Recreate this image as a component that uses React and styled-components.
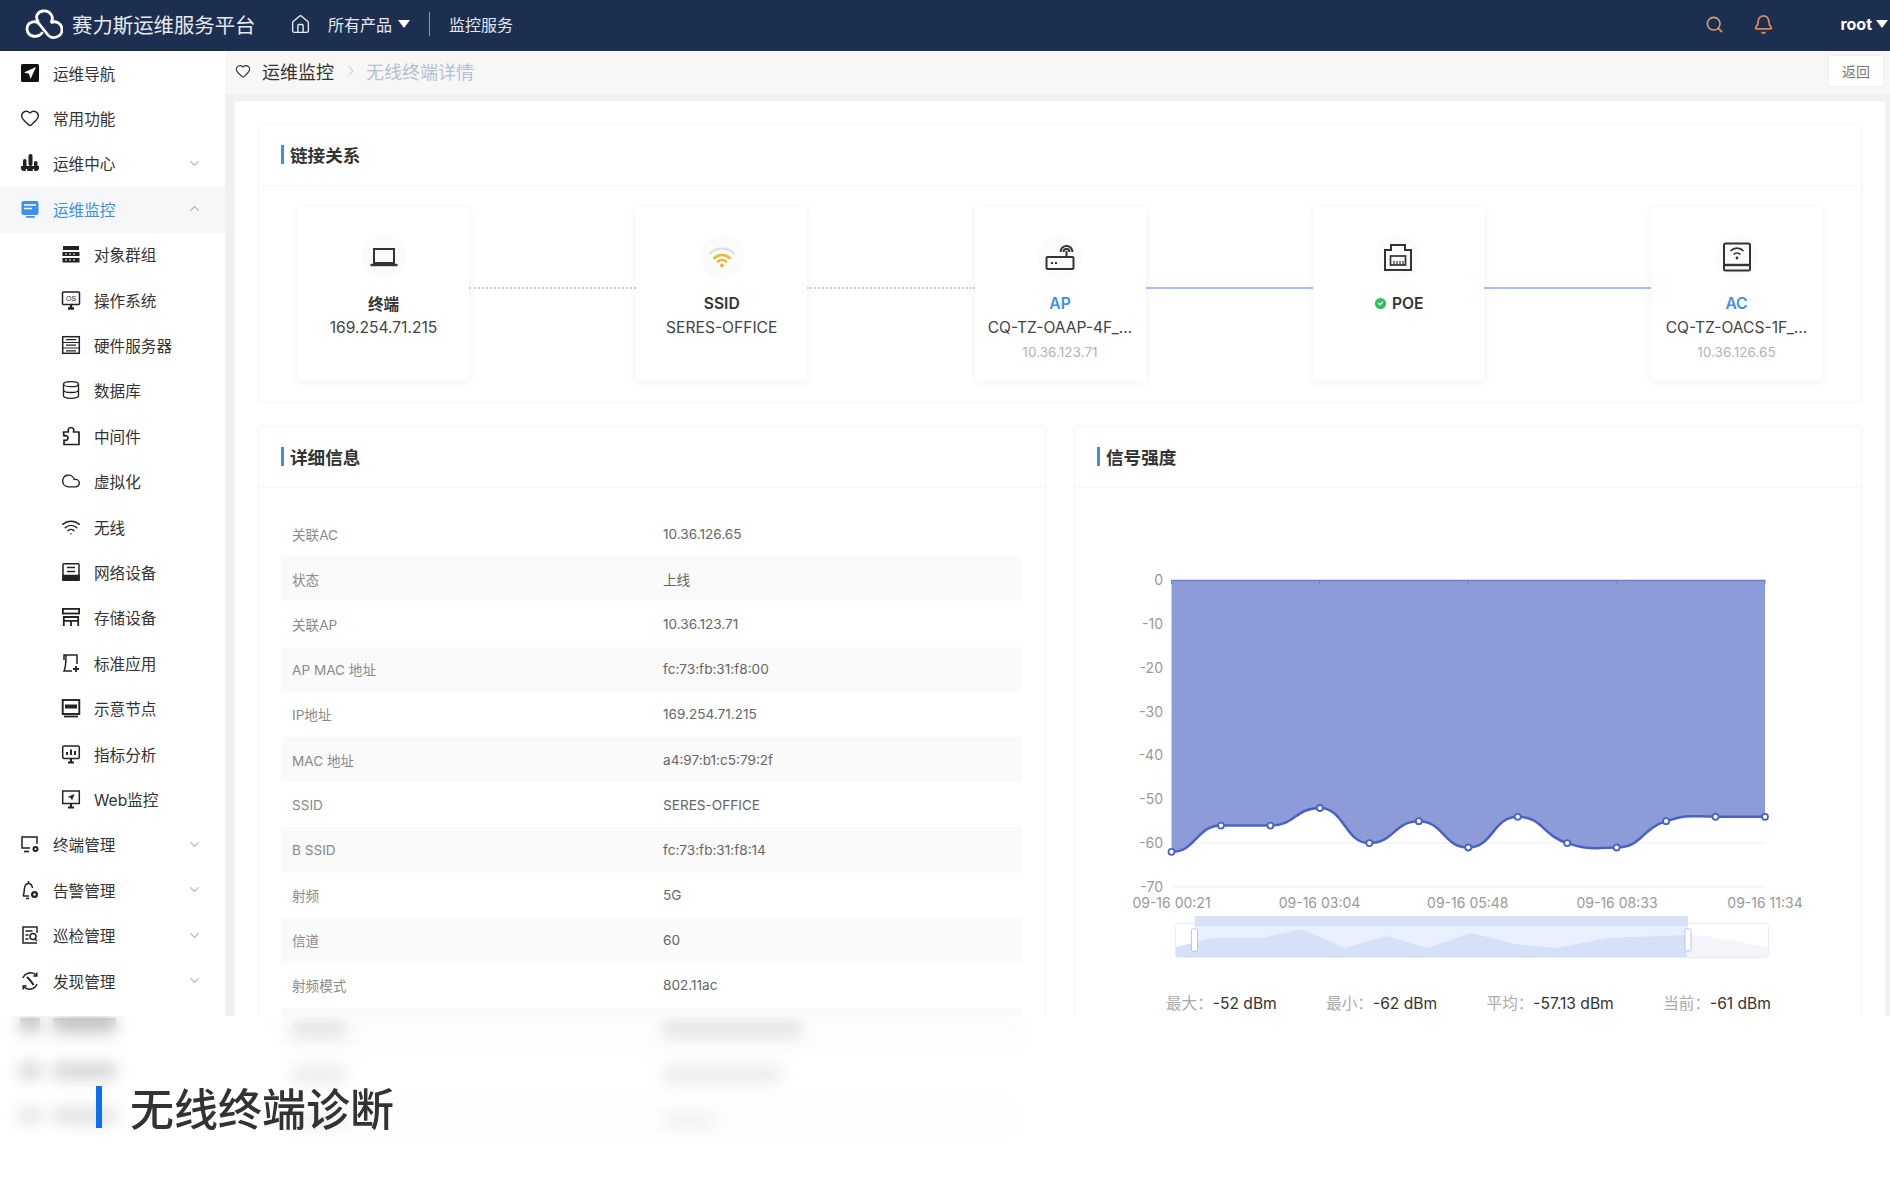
import React from "react";
import styled, { createGlobalStyle } from "styled-components";
import {
  House, Search, Bell, Heart, ChevronDown, ChevronUp, ChevronRight,
  Database, Cloud, Wifi, CircleCheck,
} from "lucide-react";

const GlobalStyle = createGlobalStyle`
  html, body {
    margin: 0;
    padding: 0;
    background: #fff;
    font-family: "Inter", "Noto Sans CJK SC", sans-serif;
    color: #333;
  }
`;

const Page = styled.div`
  position: relative;
  width: 1890px;
  height: 1197px;
  overflow: hidden;
  background: #fff;
`;

const TopBar = styled.header`
  height: 51px;
  box-sizing: border-box;
  background: #1d2f50;
  display: flex;
  align-items: center;
  padding: 0 0 3px 25px;
  color: #e6e9ef;
  font-size: 16px;
`;

const Brand = styled.div`
  display: flex;
  align-items: center;
  gap: 9px;
  font-size: 20.4px;
  width: 265px;
`;

const TopMenu = styled.div`
  display: flex;
  align-items: center;
`;

const ProductMenu = styled.span`
  margin-left: 17px;
`;

const Caret = styled.i`
  display: inline-block;
  width: 0;
  height: 0;
  border-left: 6px solid transparent;
  border-right: 6px solid transparent;
  border-top: 8px solid #fff;
  margin-left: ${(p) => p.$gap || 6}px;
`;

const TopDivider = styled.span`
  width: 1px;
  height: 24px;
  background: #8a96ad;
  margin: 0 19px 0 19px;
`;

const TopRight = styled.div`
  margin-left: auto;
  display: flex;
  align-items: center;
  padding-right: 2px;
`;

const UserName = styled.span`
  font-weight: 700;
  color: #fff;
  margin-left: 66px;
`;

const BellWrap = styled.span`
  display: flex;
  margin-left: 29px;
`;

const Body = styled.div`
  display: flex;
  height: 1146px;
`;

const Sidebar = styled.nav`
  width: 225px;
  flex: none;
  background: #fff;
`;

const NavRow = styled.div`
  height: 45.4px;
  box-sizing: border-box;
  display: flex;
  align-items: center;
  gap: 13px;
  padding: 0 23px 2px ${(p) => (p.$sub ? 61 : 20)}px;
  font-size: 15.6px;
  color: ${(p) => (p.$active ? "#3f8ee9" : "#333")};
  background: ${(p) => (p.$active ? "#f6f7f8" : "transparent")};
  svg {
    flex: none;
  }
`;

const NavArrow = styled.span`
  margin-left: auto;
  display: flex;
  color: #b5b5b5;
`;

const BlurBlock = styled.span`
  display: block;
  width: ${(p) => p.$w}px;
  height: 15px;
  background: ${(p) => (p.$light ? "#c6c6c6" : "#8a8a8a")};
`;

const Main = styled.main`
  flex: 1;
  min-width: 0;
  background: linear-gradient(#f1f1f1 965px, #fff 965px);
  display: flex;
  flex-direction: column;
`;

const Crumbs = styled.div`
  height: 43px;
  box-sizing: border-box;
  flex: none;
  display: flex;
  align-items: center;
  padding: 0 6px 3px 10px;
  background: #f7f7f7;
  font-size: 18px;
  color: #333;
`;

const CrumbHeart = styled.span`
  display: flex;
  margin-right: 11px;
`;

const CrumbSep = styled.span`
  display: flex;
  margin: 0 7px 0 9px;
  color: #d4d8df;
`;

const CrumbCurrent = styled.span`
  color: #b4c0d8;
`;

const BackButton = styled.button`
  margin-left: auto;
  width: 56px;
  height: 32px;
  background: #fff;
  border: 1px solid #eeeeee;
  font: inherit;
  font-size: 14px;
  color: #777;
  padding: 0;
`;

const Content = styled.div`
  flex: 1;
  margin: 7px 5px 0 10px;
  background: #fff;
  padding: 23px;
  display: flex;
  flex-direction: column;
  gap: 23px;
`;

const Section = styled.section`
  border: 1px solid #f7f7f7;
  box-shadow: 0 0 4px rgba(0, 0, 0, 0.015);
  display: flex;
  flex-direction: column;
  min-width: 0;
`;

const SectionHead = styled.h3`
  height: 61px;
  margin: 0;
  flex: none;
  box-sizing: border-box;
  display: flex;
  align-items: center;
  padding: 0 0 2px 22px;
  border-bottom: 1px solid #f5f5f5;
  font-size: 17.6px;
  font-weight: 600;
  color: #333;
  &::before {
    content: "";
    width: 3px;
    height: 19px;
    background: #3f8ee9;
    margin-right: 6px;
  }
`;

const LinkRow = styled.div`
  display: flex;
  align-items: center;
  padding: 21px 39px;
`;

const NodeCard = styled.div`
  width: 171px;
  height: 174px;
  flex: none;
  padding-top: 28px;
  box-sizing: border-box;
  display: flex;
  flex-direction: column;
  align-items: center;
  background: #fff;
  box-shadow: 0 1px 9px rgba(0, 0, 0, 0.06);
`;

const NodeIcon = styled.div`
  width: 44px;
  height: 44px;
  border-radius: 50%;
  background: #fbfbfb;
  display: flex;
  align-items: center;
  justify-content: center;
  margin-bottom: 12px;
`;

const NodeName = styled.div`
  display: flex;
  align-items: center;
  gap: 4px;
  height: 24px;
  font-size: 15.6px;
  font-weight: 600;
  color: ${(p) => (p.$blue ? "#3f8ee9" : "#333")};
`;

const NodeText = styled.div`
  height: 24px;
  line-height: 26px;
  font-size: 15.6px;
  color: #444;
  white-space: nowrap;
`;

const NodeIp = styled.div`
  height: 26px;
  line-height: 26px;
  font-size: 13.6px;
  color: #b3b3b3;
`;

const Connector = styled.div`
  flex: 1;
  margin-top: -12px;
  border-top: 2px ${(p) => (p.$on ? "solid #a9c1f0" : "dotted #cfcfcf")};
`;

const Lower = styled.div`
  display: grid;
  grid-template-columns: 788px 788px;
  gap: 28px;
  flex: 1;
`;

const InfoTable = styled.div`
  padding: 23px 23px 0 22px;
`;

const InfoRow = styled.div`
  height: 45.2px;
  display: flex;
  align-items: center;
  padding-left: 11px;
  font-size: 13.6px;
  color: #666;
  background: ${(p) => (p.$even ? "#fafafa" : "#fff")};
`;

const InfoLabel = styled.span`
  width: 371px;
  flex: none;
  color: #8a8a8a;
`;

const ChartSvg = styled.svg`
  display: block;
  width: 786px;
  height: 500px;
  flex: none;
`;

const Stats = styled.div`
  display: flex;
  justify-content: space-between;
  margin: 3px 90px 0 91px;
  font-size: 15.6px;
  color: #333;
  white-space: nowrap;
`;

const StatLabel = styled.span`
  color: #ababab;
`;

const Overlay = styled.div`
  position: absolute;
  left: 0;
  right: 0;
  top: 1016px;
  bottom: 0;
  backdrop-filter: blur(8px);
  background: linear-gradient(rgba(255, 255, 255, 0.45), rgba(255, 255, 255, 0.8) 130px);
  display: flex;
  align-items: flex-start;
  padding: 70px 0 0 96px;
`;

const Heading = styled.h1`
  margin: 0;
  display: flex;
  align-items: center;
  gap: 28px;
  height: 42px;
  font-size: 44px;
  font-weight: 500;
  color: #333;
  &::before {
    content: "";
    width: 6px;
    height: 42px;
    background: #0b6ff0;
  }
`;

const ic = { width: 20, height: 20, viewBox: "0 0 20 20", fill: "none", stroke: "#222", strokeWidth: 1.5 };

const Logo = () => (
  <svg width="38" height="32" viewBox="0 0 38 32" fill="none" stroke="#fff" strokeWidth="2.8" strokeLinecap="round">
    <path d="M17 25C13 30 3 30 2 21C2 14 11 11 15 17L23 27C27 32 37 29 37 22C37 15 30 12 26 15C30 8 24 2 18 3C12 4 10 9 13 13" />
  </svg>
);

const navIcons = {
  guide: (
    <svg {...ic} stroke="none" fill="#111">
      <rect x="1" y="1" width="18" height="18" rx="1.5" />
      <path d="M16 4L10.5 16L9 10.8L4 9.4Z" fill="#fff" />
    </svg>
  ),
  fav: <Heart size={20} strokeWidth={1.7} color="#222" />,
  center: (
    <svg {...ic} stroke="none" fill="#222">
      <rect x="8.5" y="1" width="4" height="12" rx="2" />
      <rect x="3" y="6" width="3.5" height="8" rx="1.7" />
      <rect x="14" y="8" width="3.5" height="6" rx="1.7" />
      <path d="M1 13h18v2a3 3 0 0 1-3 3H4a3 3 0 0 1-3-3z" />
      <path d="M6.5 16v3M13.5 16v3" stroke="#fff" strokeWidth="1.4" />
    </svg>
  ),
  monitor: (
    <svg {...ic} stroke="none" fill="#3f8ee9">
      <rect x="1.5" y="2" width="17" height="14" rx="2" />
      <path d="M4 6h12M4 9.5h8" stroke="#fff" strokeWidth="1.5" />
      <rect x="6" y="17" width="9" height="1.8" rx=".9" />
    </svg>
  ),
  group: (
    <svg {...ic}>
      <path d="M2 3h16M2 5h16" strokeWidth="2" />
      <rect x="1.5" y="8" width="17" height="4" fill="#222" stroke="none" />
      <rect x="1.5" y="14" width="17" height="4.5" fill="#222" stroke="none" />
      <path d="M4 10h2M8 10h2M12 10h2M4 16h2M8 16h2M12 16h2" stroke="#fff" strokeWidth="1" />
    </svg>
  ),
  os: (
    <svg {...ic}>
      <rect x="1.5" y="2" width="17" height="12.5" rx="1" />
      <path d="M7 18.5h6M10 15v3" strokeWidth="2.4" />
      <text x="10" y="11" fontSize="7" fill="#222" stroke="none" textAnchor="middle" fontFamily="Liberation Sans, sans-serif">OS</text>
    </svg>
  ),
  server: (
    <svg {...ic}>
      <rect x="1.7" y="1.7" width="16.6" height="16.6" />
      <path d="M1.7 7.5h16.6M1.7 13h16.6M5 4.6h10M5 10.2h10M5 15.8h10" strokeWidth="1.2" />
    </svg>
  ),
  db: <Database size={20} strokeWidth={1.6} color="#222" />,
  mid: (
    <svg {...ic} strokeWidth="1.7" strokeLinejoin="round">
      <path d="M2.500 6H7.500C6.500 3 8 1.500 10 1.500S13.500 3 12.500 6H18V18.500H3V14C5.500 15 7 13.500 7 12S5.500 9 3 10Z" />
    </svg>
  ),
  cloud: <Cloud size={20} strokeWidth={1.7} color="#222" />,
  wifi: <Wifi size={20} strokeWidth={1.7} color="#222" />,
  net: (
    <svg {...ic}>
      <rect x="2" y="1.7" width="16" height="16.600" rx="1" />
      <path d="M6 5.500h8M6 9.500h8" />
      <path d="M2 13.500h16v4.800H2z" fill="#222" />
    </svg>
  ),
  store: (
    <svg {...ic} strokeWidth="1.800">
      <rect x="1.900" y="1.900" width="16.200" height="4.600" />
      <path d="M2 10h16M2.800 10v9M17.200 10v9M10 13.800v5.200M2.800 13.800h14.400" />
    </svg>
  ),
  app: (
    <svg {...ic}>
      <path d="M5 2h11v9M5 2C5 8 5 14 3 18h8" />
      <path d="M5 2L3 2v5" />
      <path d="M15 13v6M12 16h6" strokeWidth="1.8" />
    </svg>
  ),
  node: (
    <svg {...ic}>
      <rect x="1.7" y="2" width="16.6" height="14" fill="none" strokeWidth="1.9" />
      <rect x="4" y="6.5" width="12" height="4" fill="#222" stroke="none" />
      <path d="M3 18.5h14" strokeWidth="1.8" />
    </svg>
  ),
  metric: (
    <svg {...ic}>
      <rect x="1.7" y="2" width="16.6" height="12.5" rx="1.5" />
      <path d="M6 11V8M10 11V5.5M14 11V7" strokeWidth="1.9" />
      <path d="M7 18.5h6M10 15v3" strokeWidth="2.2" />
    </svg>
  ),
  web: (
    <svg {...ic}>
      <rect x="1.7" y="2" width="16.6" height="12.5" />
      <path d="M13.5 5L11 11.5L9.6 8.8L6.5 8z" fill="#222" stroke="none" />
      <path d="M7 18.5h6M10 15v3" strokeWidth="2.2" />
    </svg>
  ),
  terminal: (
    <svg {...ic}>
      <path d="M10 14H2V3h15v7" />
      <path d="M4 17.5h5" strokeWidth="1.7" />
      <circle cx="15.5" cy="15" r="3" fill="#222" stroke="none" />
      <circle cx="15.5" cy="15" r="1" fill="#fff" stroke="none" />
    </svg>
  ),
  alarm: (
    <svg {...ic}>
      <path d="M3 16c1.500-2 1-5 1.500-8C5 5 7 3.500 8.500 3.500S12 5 12.500 8M3 16h6M8.500 1v2.500" />
      <path d="M6 18.500h3" />
      <circle cx="14.500" cy="14.500" r="3.500" fill="#222" stroke="none" />
      <circle cx="14.500" cy="14.500" r="1.200" fill="#fff" stroke="none" />
    </svg>
  ),
  inspect: (
    <svg {...ic}>
      <path d="M17 8V2H3v16h14" />
      <path d="M5.500 6h7M5.500 10h3M5.500 14h3" />
      <circle cx="13" cy="11.500" r="3" />
      <path d="M15 14l2 2" />
    </svg>
  ),
  found: (
    <svg {...ic}>
      <path d="M3 7A8 8 0 0 1 16.500 4.500M17 13A8 8 0 0 1 3.500 15.500" />
      <path d="M16.800 1.500v3.500h-3.500M3.200 18.500V15h3.500" />
      <path d="M7 6c2 2 5 5 6.500 8" strokeWidth="1.800" />
    </svg>
  ),
};

const navItems = [
  { key: "guide", label: "运维导航" },
  { key: "fav", label: "常用功能" },
  { key: "center", label: "运维中心", arrow: "down" },
  { key: "monitor", label: "运维监控", arrow: "up", active: true },
  { key: "group", label: "对象群组", sub: true },
  { key: "os", label: "操作系统", sub: true },
  { key: "server", label: "硬件服务器", sub: true },
  { key: "db", label: "数据库", sub: true },
  { key: "mid", label: "中间件", sub: true },
  { key: "cloud", label: "虚拟化", sub: true },
  { key: "wifi", label: "无线", sub: true },
  { key: "net", label: "网络设备", sub: true },
  { key: "store", label: "存储设备", sub: true },
  { key: "app", label: "标准应用", sub: true },
  { key: "node", label: "示意节点", sub: true },
  { key: "metric", label: "指标分析", sub: true },
  { key: "web", label: "Web监控", sub: true },
  { key: "terminal", label: "终端管理", arrow: "down" },
  { key: "alarm", label: "告警管理", arrow: "down" },
  { key: "inspect", label: "巡检管理", arrow: "down" },
  { key: "found", label: "发现管理", arrow: "down" },
];

const infoRows = [
  ["关联AC", "10.36.126.65"],
  ["状态", "上线"],
  ["关联AP", "10.36.123.71"],
  ["AP MAC 地址", "fc:73:fb:31:f8:00"],
  ["IP地址", "169.254.71.215"],
  ["MAC 地址", "a4:97:b1:c5:79:2f"],
  ["SSID", "SERES-OFFICE"],
  ["B SSID", "fc:73:fb:31:f8:14"],
  ["射频", "5G"],
  ["信道", "60"],
  ["射频模式", "802.11ac"],
];

const big = { width: 32, height: 32, viewBox: "0 0 32 32", fill: "none", stroke: "#333", strokeWidth: 2 };

const LaptopIcon = () => (
  <svg {...big}>
    <rect x="6" y="8" width="20" height="14" />
    <path d="M2.500 24h27" strokeWidth="2.400" />
  </svg>
);
const SsidIcon = () => (
  <svg {...big} strokeLinecap="round">
    <path d="M4 12.500a17 17 0 0 1 24 0" stroke="#ddd" />
    <path d="M8.500 17a11 11 0 0 1 15 0" stroke="#f0b431" strokeWidth="2.600" />
    <path d="M12 20.500a6 6 0 0 1 8 0" stroke="#f0b431" strokeWidth="2.600" />
    <circle cx="16" cy="24.500" r="2" fill="#f0b431" stroke="none" />
  </svg>
);
const RouterIcon = () => (
  <svg {...big}>
    <rect x="2.500" y="16" width="27" height="12" rx="1" />
    <path d="M7 22h2M11 22h2" strokeWidth="2" />
    <path d="M22.500 16V10" />
    <path d="M16.500 11a6 6 0 0 1 12 0M19.500 11a3 3 0 0 1 6 0" />
  </svg>
);
const PoeIcon = () => (
  <svg {...big}>
    <path d="M9 4h14v5h6v20H3V9h6z" />
    <rect x="8.500" y="15" width="15" height="9" strokeWidth="1.700" />
    <path d="M12 20v4M15 20v4M18 20v4M21 20v4" strokeWidth="1.200" />
  </svg>
);
const AcIcon = () => (
  <svg {...big}>
    <rect x="3" y="2.500" width="26" height="27" rx="1.500" />
    <path d="M3 24h26" strokeWidth="2.400" />
    <path d="M9.500 10a9 9 0 0 1 13 0M12.500 13.500a5 5 0 0 1 7 0" strokeWidth="1.700" />
    <circle cx="16" cy="17" r="1.400" fill="#333" stroke="none" />
  </svg>
);

// chart values, y axis runs 0 at px 580 down to -70 at px 887
const values = [-62, -56, -56, -52, -60, -55, -61, -54, -60, -61, -55, -54, -54];
const X0 = 1171.5;
const STEP = 49.46;
const valueY = (v) => 580 - v * 4.385;
const pts = values.map((v, i) => [X0 + STEP * i, valueY(v)]);

const smoothLine = () => {
  const slope = pts.map(([, y], i) => {
    if (i === 0 || i === pts.length - 1) return 0;
    const a = pts[i - 1][1];
    const b = pts[i + 1][1];
    if ((y - a) * (b - y) <= 0) return 0;
    return (b - a) / 2;
  });
  let d = `M${pts[0][0]} ${pts[0][1]}`;
  for (let i = 1; i < pts.length; i++) {
    const [x0, y0] = pts[i - 1];
    const [x1, y1] = pts[i];
    const dx = (x1 - x0) * 0.5;
    d += `C${x0 + dx} ${y0 + slope[i - 1] * 0.5} ${x1 - dx} ${y1 - slope[i] * 0.5} ${x1} ${y1}`;
  }
  return d;
};

const line = smoothLine();
const ticks = [0, -10, -20, -30, -40, -50, -60, -70];
const timeLabels = [
  [1171.5, "09-16 00:21"],
  [1319.5, "09-16 03:04"],
  [1467.8, "09-16 05:48"],
  [1617, "09-16 08:33"],
  [1765, "09-16 11:34"],
];

const SignalChart = () => (
  <ChartSvg viewBox="1075 488 786 500">
    {ticks.map((t) => (
      <g key={t}>
        <line x1="1171.5" x2="1765" y1={valueY(t)} y2={valueY(t)} stroke="#eeeeee" />
        <text x="1163" y={valueY(t) + 5} textAnchor="end" fontSize="14" fill="#999" fontFamily="Inter, sans-serif">{t}</text>
      </g>
    ))}
    <path d={`M${X0} 580L${line.slice(1)}L1765 580Z`} fill="#8d9cd8" />
    <path d={line} fill="none" stroke="#4a63c2" strokeWidth="2.5" />
    <line x1="1171.5" x2="1765" y1="580.5" y2="580.5" stroke="#6f82cc" strokeWidth="1.500" />
    {pts.map(([x, y]) => (
      <circle key={x} cx={x} cy={y} r="3" fill="#fff" stroke="#4a63c2" strokeWidth="1.800" />
    ))}
    {timeLabels.map(([x, label]) => (
      <g key={label}>
        <line x1={x} x2={x} y1="580" y2="584" stroke="#6f82cc" />
        <text x={x} y="908" textAnchor="middle" fontSize="14" fill="#999" fontFamily="Inter, sans-serif">{label}</text>
      </g>
    ))}
    <rect x="1175.500" y="923.500" width="593" height="34" rx="3" fill="#fff" stroke="#e8ecf4" />
    <rect x="1194.700" y="926" width="493.300" height="31" fill="#e8f0fe" />
    <rect x="1194.700" y="916" width="493.300" height="10" fill="#d9e1f5" />
    <path d="M1176 957V947L1213 938H1263L1301 929L1345 948L1387 936L1427 948L1471 933L1515 944L1556 948L1609 938L1687 935V957Z" fill="#d6e0f9" />
    <path d="M1687 935L1705 936L1768 947V957H1687Z" fill="#f3f5fb" />
    <rect x="1191.500" y="929" width="6" height="22" rx="1" fill="#fff" stroke="#b9c8e6" />
    <rect x="1685" y="929" width="6" height="22" rx="1" fill="#fff" stroke="#b9c8e6" />
  </ChartSvg>
);

export default function App() {
  return (
    <Page>
      <GlobalStyle />
      <TopBar>
        <Brand>
          <Logo />
          赛力斯运维服务平台
        </Brand>
        <TopMenu>
          <House size={21} strokeWidth={1.6} />
          <ProductMenu>所有产品</ProductMenu>
          <Caret />
          <TopDivider />
          监控服务
        </TopMenu>
        <TopRight>
          <Search size={19} strokeWidth={2} color="#dba26a" />
          <BellWrap>
            <Bell size={21} strokeWidth={2} color="#dd8a4e" />
          </BellWrap>
          <UserName>root</UserName>
          <Caret $gap={4} />
        </TopRight>
      </TopBar>
      <Body>
        <Sidebar>
          {navItems.map((item) => (
            <NavRow key={item.key} $sub={item.sub} $active={item.active}>
              {navIcons[item.key]}
              {item.label}
              {item.arrow && (
                <NavArrow>
                  {item.arrow === "up" ? <ChevronUp size={15} /> : <ChevronDown size={15} />}
                </NavArrow>
              )}
            </NavRow>
          ))}
          {[0, 1, 2].map((i) => (
            <NavRow key={i}>
              <BlurBlock $w={20} />
              <BlurBlock $w={63} />
            </NavRow>
          ))}
        </Sidebar>
        <Main>
          <Crumbs>
            <CrumbHeart>
              <Heart size={16} strokeWidth={1.7} color="#333" />
            </CrumbHeart>
            运维监控
            <CrumbSep>
              <ChevronRight size={16} />
            </CrumbSep>
            <CrumbCurrent>无线终端详情</CrumbCurrent>
            <BackButton>返回</BackButton>
          </Crumbs>
          <Content>
            <Section>
              <SectionHead>链接关系</SectionHead>
              <LinkRow>
                <NodeCard>
                  <NodeIcon><LaptopIcon /></NodeIcon>
                  <NodeName>终端</NodeName>
                  <NodeText>169.254.71.215</NodeText>
                </NodeCard>
                <Connector />
                <NodeCard>
                  <NodeIcon><SsidIcon /></NodeIcon>
                  <NodeName>SSID</NodeName>
                  <NodeText>SERES-OFFICE</NodeText>
                </NodeCard>
                <Connector />
                <NodeCard>
                  <NodeIcon><RouterIcon /></NodeIcon>
                  <NodeName $blue>AP</NodeName>
                  <NodeText>CQ-TZ-OAAP-4F_...</NodeText>
                  <NodeIp>10.36.123.71</NodeIp>
                </NodeCard>
                <Connector $on />
                <NodeCard>
                  <NodeIcon><PoeIcon /></NodeIcon>
                  <NodeName>
                    <CircleCheck size={15} fill="#2fbf64" color="#fff" />
                    POE
                  </NodeName>
                </NodeCard>
                <Connector $on />
                <NodeCard>
                  <NodeIcon><AcIcon /></NodeIcon>
                  <NodeName $blue>AC</NodeName>
                  <NodeText>CQ-TZ-OACS-1F_...</NodeText>
                  <NodeIp>10.36.126.65</NodeIp>
                </NodeCard>
              </LinkRow>
            </Section>
            <Lower>
              <Section>
                <SectionHead>详细信息</SectionHead>
                <InfoTable>
                  {infoRows.map(([label, value], i) => (
                    <InfoRow key={label} $even={i % 2 === 1}>
                      <InfoLabel>{label}</InfoLabel>
                      {value}
                    </InfoRow>
                  ))}
                  {[138, 118, 52].map((w, i) => (
                    <InfoRow key={w} $even={i % 2 === 0}>
                      <InfoLabel><BlurBlock $light $w={54} /></InfoLabel>
                      <BlurBlock $light $w={w} />
                    </InfoRow>
                  ))}
                </InfoTable>
              </Section>
              <Section>
                <SectionHead>信号强度</SectionHead>
                <SignalChart />
                <Stats>
                  <span><StatLabel>最大：</StatLabel>-52 dBm</span>
                  <span><StatLabel>最小：</StatLabel>-62 dBm</span>
                  <span><StatLabel>平均：</StatLabel>-57.13 dBm</span>
                  <span><StatLabel>当前：</StatLabel>-61 dBm</span>
                </Stats>
              </Section>
            </Lower>
          </Content>
        </Main>
      </Body>
      <Overlay>
        <Heading>无线终端诊断</Heading>
      </Overlay>
    </Page>
  );
}
